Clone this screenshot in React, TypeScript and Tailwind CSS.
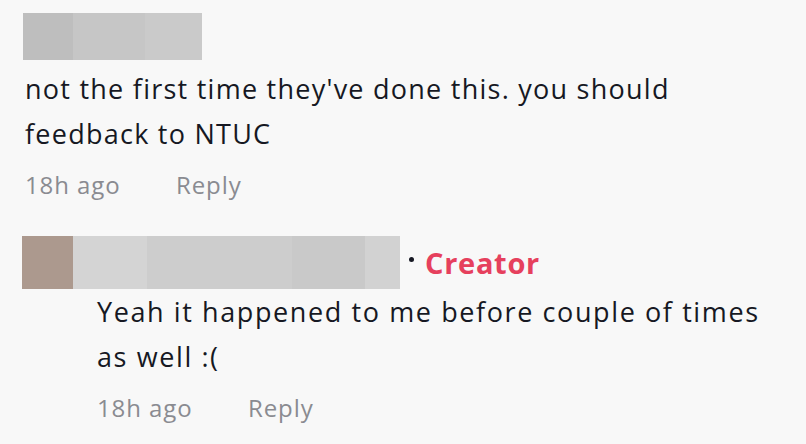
const blurTop = ['bg-[#bebebe] w-[50px]', 'bg-[#c6c6c6] w-[72px]', 'bg-[#cacaca] w-[57px]']
const blurName = ['bg-[#d4d4d4] w-[74px]', 'bg-[#cdcdcd] w-[145px]', 'bg-[#c9c9c9] w-[73px]', 'bg-[#d2d2d2] w-[35px]']

const Meta = () => (
  <div className="flex items-center text-[24px] tracking-[0.9px] text-[#8a8b91] leading-none">
    <span className="w-[151px]">18h ago</span>
    <span>Reply</span>
  </div>
)

export default function App() {
  return (
    <div className="w-[806px] h-[444px] bg-[#f8f8f8] overflow-hidden font-['Open_Sans',sans-serif] text-[#161823]">
      <div className="pt-[13px] pl-[23px]">
        <div className="flex h-[47px]">
          {blurTop.map((c) => (
            <div key={c} className={c} />
          ))}
        </div>
      </div>
      <div className="pl-[25px] pt-[6px]">
        <p className="text-[27px] leading-[45px] tracking-[1.25px]">
          not the first time they've done this. you should
          <br />
          feedback to NTUC
        </p>
        <div className="pt-[17px]">
          <Meta />
        </div>
      </div>
      <div className="pl-[22px] pt-[39px]">
        <div className="flex items-center">
          <div className="w-[51px] h-[53px] bg-[#ac998e]" />
          <div className="flex h-[53px]">
            {blurName.map((c) => (
              <div key={c} className={c} />
            ))}
          </div>
          <span className="ml-[9px] mr-[11px] w-[5px] h-[5px] rounded-full bg-[#161823] -mt-[6px]" />
          <span className="text-[29px] font-bold tracking-[0.7px] text-[#e6405d] leading-none">Creator</span>
        </div>
        <div className="pl-[75px] pt-[0px]">
          <p className="text-[27px] leading-[45px] tracking-[1.6px]">
            Yeah it happened to me before couple of times
            <br />
            as well :(
          </p>
          <div className="pt-[17px]">
            <Meta />
          </div>
        </div>
      </div>
    </div>
  )
}
